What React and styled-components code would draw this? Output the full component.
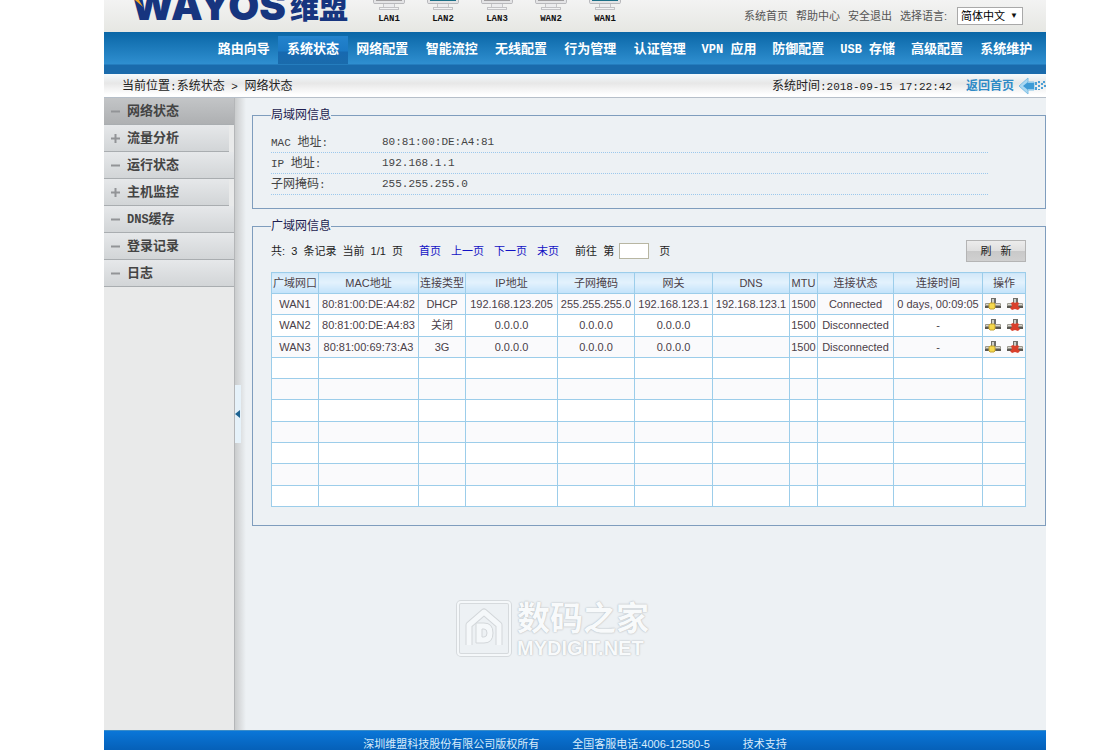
import React from 'react'
import styled, { createGlobalStyle } from 'styled-components'

const ports = [
  { name: 'LAN1', on: false },
  { name: 'LAN2', on: true },
  { name: 'LAN3', on: false },
  { name: 'WAN2', on: false },
  { name: 'WAN1', on: true },
]

const menus = [
  { text: '路由向导' },
  { text: '系统状态', active: true },
  { text: '网络配置' },
  { text: '智能流控' },
  { text: '无线配置' },
  { text: '行为管理' },
  { text: '认证管理' },
  { latin: 'VPN ', text: '应用' },
  { text: '防御配置' },
  { latin: 'USB ', text: '存储' },
  { text: '高级配置' },
  { text: '系统维护' },
]

const sideItems = [
  { text: '网络状态', active: true },
  { text: '流量分析', more: true },
  { text: '运行状态' },
  { text: '主机监控', more: true },
  { latin: 'DNS', text: '缓存' },
  { text: '登录记录' },
  { text: '日志' },
]

const lanInfo = [
  { latin: 'MAC ', label: '地址', value: '80:81:00:DE:A4:81' },
  { latin: 'IP ', label: '地址', value: '192.168.1.1' },
  { label: '子网掩码', value: '255.255.255.0' },
]

const columns = [
  { title: '广域网口', width: 47 },
  { title: 'MAC地址', width: 100 },
  { title: '连接类型', width: 47 },
  { title: 'IP地址', width: 92 },
  { title: '子网掩码', width: 77 },
  { title: '网关', width: 78 },
  { title: 'DNS', width: 77 },
  { title: 'MTU', width: 28 },
  { title: '连接状态', width: 76 },
  { title: '连接时间', width: 89 },
  { title: '操作', width: 43 },
]

const wans = [
  ['WAN1', '80:81:00:DE:A4:82', 'DHCP', '192.168.123.205', '255.255.255.0', '192.168.123.1', '192.168.123.1', '1500', 'Connected', '0 days, 00:09:05'],
  ['WAN2', '80:81:00:DE:A4:83', '关闭', '0.0.0.0', '0.0.0.0', '0.0.0.0', '', '1500', 'Disconnected', '-'],
  ['WAN3', '80:81:00:69:73:A3', '3G', '0.0.0.0', '0.0.0.0', '0.0.0.0', '', '1500', 'Disconnected', '-'],
]

const emptyRows = [1, 2, 3, 4, 5, 6, 7]

function Monitor({ on }) {
  return (
    <svg width='32' height='12' viewBox='0 0 32 12'>
      <path d='M0.5 0V3.5Q0.5 4.5 2 4.5H30Q31.5 4.5 31.5 3.5V0Z' fill='#e4e4e6' stroke='#b9b9bc' />
      <rect x='3' y='0' width='26' height='2' fill={on ? '#1c6f86' : '#a09ea0'} />
      <path d='M10.5 5V8.5H21.5V5' fill='#ececee' stroke='#c6c6c9' />
      <rect x='6.5' y='8.5' width='19' height='2' fill='#f3f3f4' stroke='#c2c2c5' />
    </svg>
  )
}

function BackArrow() {
  return (
    <svg width='28' height='18' viewBox='0 0 28 18'>
      <path d='M1 9L10 1V5H16V13H10V17Z' fill='#a9d8f2' stroke='#7fbfe4' />
      <path d='M5 9L10 5V6H16V12H10V13Z' fill='#3d9bd6' />
      <g fill='#4a9fd6'>
        <rect x='17' y='5' width='2' height='3' />
        <rect x='17' y='10' width='2' height='3' />
        <rect x='20' y='4' width='2' height='2' />
        <rect x='20' y='8' width='2' height='2' />
        <rect x='20' y='12' width='2' height='1' />
        <rect x='23' y='6' width='2' height='2' />
        <rect x='23' y='10' width='2' height='2' />
        <rect x='25' y='4' width='2' height='2' />
        <rect x='26' y='8' width='2' height='2' />
      </g>
    </svg>
  )
}

function PlugIcon({ off }) {
  return (
    <svg width='16' height='12' viewBox='0 0 16 12'>
      <rect x='6' y='0' width='5' height='6' fill='#6f6e69' />
      <rect x='7' y='1' width='2' height='5' fill='#cfcfc8' />
      <rect x='0' y='5' width='16' height='5' rx='1' fill='#9a988f' />
      <rect x='1' y='6' width='14' height='1' fill='#d9d7cf' />
      <rect x='0' y='8' width='16' height='2' fill='#5a5852' />
      {off ? (
        <path d='M4 5L6 4L8 5L10 4L12 5L11 8L13 10L11 12L8 11L5 12L3 10L5 8Z' fill='#d9402c' />
      ) : (
        <path d='M5 5H9L10 6V10L9 11H5L4 10V6Z' fill='#f5d84c' stroke='#c2a233' />
      )}
    </svg>
  )
}

function Watermark() {
  return (
    <Mark>
      <svg width='56' height='58' viewBox='0 0 56 58'>
        <g fill='none' strokeLinejoin='round'>
          <rect x='2' y='2' width='52' height='53' rx='3' stroke='#d6dadd' strokeWidth='4' />
          <rect x='2' y='2' width='52' height='53' rx='3' stroke='#f5f8fa' strokeWidth='2' />
          <path d='M13 45V25L28 12L43 25V45' stroke='#d3d7da' strokeWidth='7' />
          <path d='M13 45V25L28 12L43 25V45' stroke='#f5f8fa' strokeWidth='5' />
          <path
            d='M20 23H28Q37 23 37 33Q37 43 28 43H20Z M26 29V37H28Q31 37 31 33Q31 29 28 29Z'
            fill='#f5f8fa'
            fillRule='evenodd'
            stroke='#d3d7da'
          />
        </g>
      </svg>
      <div>
        <MarkName>数码之家</MarkName>
        <MarkSite>MYDIGIT.NET</MarkSite>
      </div>
    </Mark>
  )
}

function App() {
  return (
    <Shell>
      <GlobalStyle />
      <Header>
        <Logo>
          <span>WAYOS</span>
          <LogoCn>维盟</LogoCn>
          <LogoSpark width='8' height='7' viewBox='0 0 8 7'>
            <path d='M0 0H4L8 7Z' fill='#f5a623' />
          </LogoSpark>
        </Logo>
        <Ports>
          {ports.map((port) => (
            <Port key={port.name}>
              <Monitor on={port.on} />
              {port.name}
            </Port>
          ))}
        </Ports>
        <Tools>
          <a href='#home'>系统首页</a>
          <a href='#help'>帮助中心</a>
          <a href='#exit'>安全退出</a>
          <label htmlFor='lang'>选择语言:</label>
          <SelectBox>
            <select id='lang' defaultValue='zh'>
              <option value='zh'>简体中文</option>
            </select>
            <i>▼</i>
          </SelectBox>
        </Tools>
      </Header>
      <Nav>
        {menus.map((menu) => (
          <NavLink key={menu.text} href='#menu' $active={menu.active}>
            {menu.latin && <Mono $size='12px'>{menu.latin}</Mono>}
            {menu.text}
          </NavLink>
        ))}
      </Nav>
      <Crumbs>
        <div>
          当前位置<Mono>:</Mono>系统状态<Mono> &gt; </Mono>网络状态
        </div>
        <Clock>
          系统时间<Mono>:2018-09-15 17:22:42</Mono>
        </Clock>
        <Back href='#back'>
          返回首页
          <BackArrow />
        </Back>
      </Crumbs>
      <Body>
        <Sidebar>
          {sideItems.map((item) => (
            <SideLink key={item.text} href='#side' $active={item.active} $more={item.more}>
              <svg width='11' height='11' viewBox='0 0 11 11'>
                <path d={item.more ? 'M1 5.5H10M5.5 1V10' : 'M1 5.5H10'} stroke='#929497' strokeWidth='2' />
              </svg>
              <span>
                {item.latin && <Mono $size='12px'>{item.latin}</Mono>}
                {item.text}
              </span>
            </SideLink>
          ))}
        </Sidebar>
        <Splitter>
          <button type='button' aria-label='toggle'>
            <svg width='5' height='8' viewBox='0 0 5 8'>
              <path d='M0 4L5 0V8Z' fill='#1f6492' />
            </svg>
          </button>
        </Splitter>
        <Content>
          <Panel>
            <legend>局域网信息</legend>
            <InfoList>
              {lanInfo.map((info) => (
                <InfoRow key={info.value}>
                  <dt>
                    {info.latin && <Mono>{info.latin}</Mono>}
                    {info.label}
                    <Mono>:</Mono>
                  </dt>
                  <dd>{info.value}</dd>
                </InfoRow>
              ))}
            </InfoList>
          </Panel>
          <Panel>
            <legend>广域网信息</legend>
            <Pager>
              <Total>共:&nbsp; 3 &nbsp;条记录&nbsp; 当前&nbsp; 1/1 &nbsp;页</Total>
              <a href='#first'>首页</a>
              <a href='#prev'>上一页</a>
              <a href='#next'>下一页</a>
              <a href='#last'>末页</a>
              <Goto>
                <label htmlFor='page'>前往&nbsp; 第</label>
                <input id='page' type='text' />
                <span>页</span>
              </Goto>
              <Refresh type='button'>
                <span>刷</span>
                <span>新</span>
              </Refresh>
            </Pager>
            <Table>
              <colgroup>
                {columns.map((col) => (
                  <Col key={col.title} $width={col.width} />
                ))}
              </colgroup>
              <thead>
                <tr>
                  {columns.map((col) => (
                    <th key={col.title}>{col.title}</th>
                  ))}
                </tr>
              </thead>
              <tbody>
                {wans.map((wan) => (
                  <tr key={wan[0]}>
                    {wan.map((cell, i) => (
                      <td key={i}>{cell}</td>
                    ))}
                    <td>
                      <Actions>
                        <button type='button' aria-label='connect'>
                          <PlugIcon />
                        </button>
                        <button type='button' aria-label='disconnect'>
                          <PlugIcon off />
                        </button>
                      </Actions>
                    </td>
                  </tr>
                ))}
                {emptyRows.map((row) => (
                  <tr key={row}>
                    {columns.map((col) => (
                      <td key={col.title}></td>
                    ))}
                  </tr>
                ))}
              </tbody>
            </Table>
          </Panel>
          <Watermark />
        </Content>
      </Body>
      <Footer>
        <span>深圳维盟科技股份有限公司版权所有</span>
        <span>全国客服电话:4006-12580-5</span>
        <a href='#support'>技术支持</a>
      </Footer>
    </Shell>
  )
}

const GlobalStyle = createGlobalStyle`
  * {
    box-sizing: border-box;
  }
  body {
    margin: 0;
    background: #fff;
    color: #222;
    font-family: 'Liberation Sans', 'Noto Sans CJK SC', sans-serif;
    font-size: 12px;
    line-height: 18px;
  }
  a {
    color: inherit;
    text-decoration: none;
  }
  svg {
    display: block;
    flex: none;
  }
  button {
    padding: 0;
    border: 0;
    background: none;
    font: inherit;
  }
`
const Shell = styled.div`
  min-height: 100vh;
  margin: 0 60px 0 104px;
  display: flex;
  flex-direction: column;
`
const Mono = styled.span`
  font-family: 'Liberation Mono', monospace;
  font-size: ${(p) => p.$size || '11px'};
  line-height: 12px;
  white-space: pre;
`
const Header = styled.header`
  height: 32px;
  padding: 0 23px 0 27px;
  display: flex;
  align-items: flex-end;
  overflow: hidden;
  background: linear-gradient(#f3f3f3, #e6e7e3);
`
const Logo = styled.div`
  position: relative;
  display: flex;
  align-items: flex-end;
  gap: 4px;
  padding-bottom: 6px;
  color: #17357f;
  font-family: Inter, 'Liberation Sans', sans-serif;
  font-size: 40px;
  font-weight: 900;
  line-height: 40px;
`
const LogoCn = styled.span`
  font-family: 'Noto Sans CJK SC', sans-serif;
  font-size: 29px;
`
const LogoSpark = styled.svg`
  position: absolute;
  left: 4px;
  bottom: 25px;
`
const Ports = styled.div`
  display: flex;
  gap: 22px;
  margin-left: 25px;
  padding-bottom: 7px;
`
const Port = styled.div`
  display: flex;
  flex-direction: column;
  align-items: center;
  gap: 2px;
  color: #111;
  font-family: 'Liberation Mono', monospace;
  font-size: 9px;
  font-weight: 700;
  line-height: 12px;
`
const Tools = styled.div`
  display: flex;
  align-items: center;
  gap: 8px;
  margin-left: auto;
  padding-bottom: 7px;
  color: #555;
  font-size: 11px;
`
const SelectBox = styled.span`
  display: grid;
  align-items: center;
  margin-left: 2px;
  select {
    grid-area: 1 / 1;
    width: 66px;
    height: 18px;
    padding: 0 3px;
    appearance: none;
    border: 1px solid #a9a9a9;
    border-radius: 0;
    background: #fff;
    color: #000;
    font: inherit;
    line-height: 16px;
  }
  i {
    grid-area: 1 / 1;
    justify-self: end;
    padding-right: 5px;
    color: #111;
    font-size: 8px;
    font-style: normal;
    pointer-events: none;
  }
`
const Nav = styled.nav`
  height: 42px;
  padding: 4px 5px 10px 105px;
  display: grid;
  grid-template-columns: repeat(12, 1fr);
  background: linear-gradient(#0a66a6 0, #2f8fd0 32px, #1a6bac 33px, #1a6bac 100%);
`
const NavLink = styled.a`
  color: #fff;
  font-size: 13px;
  font-weight: 700;
  line-height: 25px;
  text-align: center;
  white-space: nowrap;
  background: ${(p) => (p.$active ? 'linear-gradient(#2383cd 0, #1b79c4 15px, #1769b0 16px, #1a6bac 100%)' : 'none')};
`
const Crumbs = styled.div`
  height: 24px;
  padding: 0 0 0 18px;
  display: flex;
  align-items: center;
  border-bottom: 1px solid #b6bfc9;
  background: linear-gradient(#f4fafd 0, #e7e7e7 40%, #fff 90%);
  color: #222;
`
const Clock = styled.div`
  margin-left: auto;
`
const Back = styled.a`
  display: flex;
  align-items: center;
  gap: 4px;
  margin-left: 14px;
  color: #2f8ac6;
  font-weight: 700;
`
const Body = styled.div`
  flex: 1;
  display: flex;
`
const Sidebar = styled.aside`
  width: 131px;
  background: #e9eaea;
  border-right: 1px solid #b4b6b8;
`
const SideLink = styled.a`
  height: 27px;
  margin-right: ${(p) => (p.$more ? '5px' : '0')};
  padding-left: 6px;
  display: flex;
  align-items: center;
  gap: 6px;
  border-bottom: 1px solid #a9adb0;
  background: ${(p) => (p.$active ? 'linear-gradient(#c3c5c7, #aeb0b2)' : 'linear-gradient(#e6e8ea, #d2d5d7)')};
  color: #444;
  font-size: 13px;
  font-weight: 700;
`
const Splitter = styled.div`
  width: 11px;
  display: flex;
  align-items: center;
  background: linear-gradient(90deg, #cacccd, #dfe2e4 60%, #edf1f4);
  button {
    width: 6px;
    height: 58px;
    display: flex;
    align-items: center;
    background: #e6f2fa;
  }
`
const Content = styled.main`
  flex: 1;
  min-width: 0;
  padding: 8px 0 0 6px;
  background: #edf1f4;
`
const Panel = styled.fieldset`
  min-width: 0;
  margin: 0 0 8px;
  padding: 0 19px 18px 18px;
  border: 1px solid #7f9dbd;
  legend {
    padding: 0;
    color: #1d1d50;
  }
`
const InfoList = styled.dl`
  margin: 8px 38px -5px 0;
`
const InfoRow = styled.div`
  height: 21px;
  display: grid;
  grid-template-columns: 111px 1fr;
  border-bottom: 1px dotted #9cc8ec;
  color: #444;
  line-height: 20px;
  dd {
    margin: 0;
    font-family: 'Liberation Mono', monospace;
    font-size: 11px;
  }
`
const Pager = styled.div`
  display: flex;
  align-items: center;
  gap: 10px;
  padding: 5px 0 10px;
  font-size: 11px;
  a {
    color: #1212c4;
  }
`
const Total = styled.span`
  margin-right: 6px;
`
const Goto = styled.div`
  display: flex;
  align-items: center;
  gap: 5px;
  margin-left: 6px;
  input {
    width: 30px;
    height: 16px;
    margin-right: 5px;
    padding: 0 2px;
    border: 1px solid #b8b6a2;
    background: #fff;
    font: inherit;
  }
`
const Refresh = styled.button`
  && {
    width: 60px;
    height: 22px;
    margin-left: auto;
    display: flex;
    align-items: center;
    justify-content: center;
    gap: 9px;
    border: 1px solid #b4b4b4;
    background: linear-gradient(#ececec 0, #dfdfdf 48%, #c9c9c9 52%, #d0d0d0 100%);
    color: #222;
  }
`
const Table = styled.table`
  width: 100%;
  height: 235px;
  border-collapse: collapse;
  table-layout: fixed;
  background: #fff;
  color: #4a4048;
  font-size: 11px;
  line-height: 16px;
  text-align: center;
  white-space: nowrap;
  th,
  td {
    height: 21px;
    padding: 0;
    border: 1px solid #9ccdea;
  }
  th {
    background: linear-gradient(#d3e8f8, #e3f2fd 45%, #c2e2fa);
    font-weight: 400;
  }
  tbody tr:nth-child(odd) {
    background: #fafafc;
  }
`
const Col = styled.col`
  width: ${(p) => p.$width}px;
`
const Actions = styled.div`
  display: flex;
  justify-content: center;
  gap: 6px;
`
const Mark = styled.div`
  display: flex;
  gap: 5px;
  margin: 74px 0 0 204px;
  color: #f8fafb;
  font-weight: 700;
  text-shadow: 0 0 2px #b4b9bd, 0 0 1px #c4c8cc;
`
const MarkName = styled.div`
  font-size: 33px;
  line-height: 38px;
`
const MarkSite = styled.div`
  font-size: 20px;
  line-height: 20px;
`
const Footer = styled.footer`
  padding-top: 7px;
  display: flex;
  justify-content: center;
  gap: 33px;
  border-top: 1px solid #3a8cc8;
  background: linear-gradient(#0a76d8, #0560b8);
  color: #d8ecfb;
  font-size: 11px;
  line-height: 12px;
`

export default App
